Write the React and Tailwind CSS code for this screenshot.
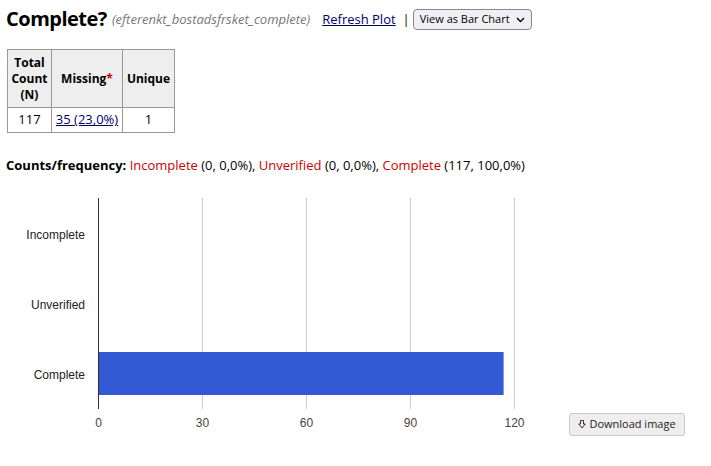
import React from "react";

export default function App() {
  const x0 = 98;
  const per = 104 / 30;
  const ticks = [0, 30, 60, 90, 120];
  return (
    <div className="w-[711px] h-[466px] bg-white text-[#000] font-['Open_Sans',sans-serif] relative overflow-hidden">
      <div className="flex items-center pl-[6px] pt-[3px] h-[35px] whitespace-nowrap">
        <span className="text-[20px] font-bold leading-none tracking-[-0.5px]">Complete?</span>
        <span className="ml-[5px] text-[13px] italic text-[#777] mt-[2px]">(efterenkt_bostadsfrsket_complete)</span>
        <a href="#" className="ml-[12px] text-[13px] underline text-[#000066] mt-[1px]">Refresh Plot</a>
        <span className="ml-[7px] text-[13px] text-[#000] mt-[1px]">|</span>
        <div className="ml-[3px] mt-[1px] h-[21px] w-[119px] border border-[#888] rounded-[4px] bg-[#f0f0f4] flex items-center justify-between pl-[6px] pr-[6px] text-[11px] text-black whitespace-nowrap">
          <span>View as Bar Chart</span>
          <svg width="9" height="6" viewBox="0 0 9 6"><path d="M1 1 L4.5 4.5 L8 1" fill="none" stroke="#000" strokeWidth="1.4" /></svg>
        </div>
      </div>

      <table className="ml-[7px] mt-[14px] border-collapse text-[12px]">
        <thead>
          <tr className="bg-[#eeeeee]">
            <th className="border border-[#999] w-[44px] h-[58px] font-bold leading-[16px] text-center px-[2px]">Total<br />Count<br />(N)</th>
            <th className="border border-[#999] w-[71px] font-bold text-center">Missing<span className="text-[#cc0000]">*</span></th>
            <th className="border border-[#999] w-[52px] font-bold text-center">Unique</th>
          </tr>
        </thead>
        <tbody>
          <tr>
            <td className="border border-[#999] h-[25px] text-center text-[13px]">117</td>
            <td className="border border-[#999] text-center text-[13px]"><a href="#" className="underline text-[#000066]">35 (23,0%)</a></td>
            <td className="border border-[#999] text-center text-[13px]">1</td>
          </tr>
        </tbody>
      </table>

      <div className="pl-[6px] mt-[23px] text-[13px] leading-[19px] whitespace-nowrap">
        <span className="font-bold">Counts/frequency: </span>
        <span className="text-[#cc0000]">Incomplete</span> (0, 0,0%), <span className="text-[#cc0000]">Unverified</span> (0, 0,0%), <span className="text-[#cc0000]">Complete</span> (117, 100,0%)
      </div>

      <div className="flex items-end mt-[14px]">
        <svg width="560" height="251" viewBox="0 189 560 251" className="block shrink-0">
          {ticks.map((t) => (
            t === 0 ? null : (
              <line key={t} x1={x0 + t * per + 0.5} x2={x0 + t * per + 0.5} y1={198} y2={409} stroke="#cccccc" strokeWidth="1" />
            )
          ))}
          <rect x={x0} y={352} width={117 * per} height={43} fill="#3359d4" />
          <line x1={x0 + 0.5} x2={x0 + 0.5} y1={198} y2={409} stroke="#333" strokeWidth="1" />
          <g fontFamily="'Liberation Sans', Arial, sans-serif" fontSize="12" fill="#222" textAnchor="end">
            <text x="85" y="238.5">Incomplete</text>
            <text x="85" y="308.5">Unverified</text>
            <text x="85" y="378.5">Complete</text>
          </g>
          <g fontFamily="'Liberation Sans', Arial, sans-serif" fontSize="12" fill="#444" textAnchor="middle">
            {ticks.map((t) => (
              <text key={t} x={x0 + t * per + 0.5} y="426.5">{t}</text>
            ))}
          </g>
        </svg>
        <button className="ml-[9px] mb-[4px] h-[23px] w-[116px] border border-[#c8c8c8] rounded-[3px] bg-[#eeeeee] flex items-center justify-center gap-[3px] text-[11px] text-[#222]">
          <svg width="8" height="9" viewBox="0 0 8 9"><path d="M2.5 0.5 H5.5 V4 H7.3 L4 8 L0.7 4 H2.5 Z" fill="none" stroke="#333" strokeWidth="1" /></svg>
          <span>Download image</span>
        </button>
      </div>
    </div>
  );
}
